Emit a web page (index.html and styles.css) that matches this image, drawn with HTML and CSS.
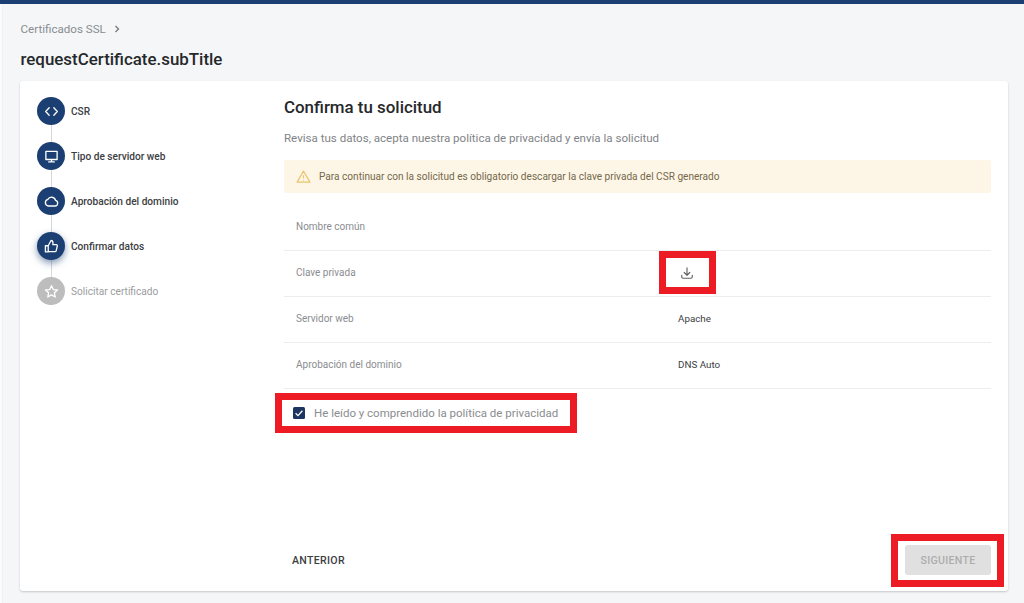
FILE: index.html
```html
<!DOCTYPE html>
<html lang="es">
<head>
<meta charset="utf-8">
<title>Certificados SSL</title>
<link rel="stylesheet" href="styles.css">
</head>
<body>
<header class="topbar"></header>
<div class="shell">
  <aside class="rail"></aside>
  <main class="content">
    <nav class="crumbs"><span>Certificados SSL</span>
      <svg class="crumb-icon" viewBox="0 0 8 8"><path d="M2.5 1l3 3-3 3" /></svg>
    </nav>
    <h1 class="page-title">requestCertificate.subTitle</h1>
    <section class="card">
      <ol class="stepper">
        <li class="step">
          <span class="dot"><svg viewBox="0 0 16 16"><path d="M5.5 4L1.8 8l3.7 4M10.5 4l3.7 4-3.7 4"/></svg></span>
          <span class="step-label">CSR</span>
        </li>
        <li class="step">
          <span class="dot"><svg viewBox="0 0 16 16"><path d="M2 2.6h12v8.6H2zM8 11.2v2.4M5 13.8h6"/></svg></span>
          <span class="step-label">Tipo de servidor web</span>
        </li>
        <li class="step">
          <span class="dot"><svg viewBox="0 0 16 16"><path d="M4.4 12.8h7.4a3 3 0 0 0 .5-5.9 4.4 4.4 0 0 0-8.2-1.1 3.6 3.6 0 0 0 .3 7z"/></svg></span>
          <span class="step-label">Aprobación del dominio</span>
        </li>
        <li class="step step-current">
          <span class="dot"><svg viewBox="0 0 16 16"><path d="M1.5 7.2h3v6.6h-3zM4.5 7.2l3-5.6c1.2 0 2 .8 2 2v2.4h3.6c.8 0 1.3.7 1.1 1.5l-1.2 5c-.2.6-.6 1-1.2 1H4.5"/></svg></span>
          <span class="step-label">Confirmar datos</span>
        </li>
        <li class="step step-pending">
          <span class="dot"><svg viewBox="0 0 16 16"><path d="M8 1.8l1.9 4.1 4.5.5-3.3 3 .9 4.5L8 11.6l-4 2.3.9-4.5-3.3-3 4.5-.5z"/></svg></span>
          <span class="step-label">Solicitar certificado</span>
        </li>
      </ol>
      <div class="panel">
        <h2 class="panel-title">Confirma tu solicitud</h2>
        <p class="panel-sub">Revisa tus datos, acepta nuestra política de privacidad y envía la solicitud</p>
        <div class="alert">
          <svg class="alert-icon" viewBox="0 0 16 16"><path d="M8 2.2L14.8 14H1.2zM8 6.6v3.6M8 11.6v.9"/></svg>
          <span>Para continuar con la solicitud es obligatorio descargar la clave privada del CSR generado</span>
        </div>
        <dl class="rows">
          <div class="row"><dt>Nombre común</dt><dd></dd></div>
          <div class="row"><dt>Clave privada</dt><dd>
            <svg class="download" viewBox="0 0 16 16"><path d="M8 2v8.4M4.8 7.4L8 10.6l3.2-3.2M2 10.6v2a1.4 1.4 0 0 0 1.4 1.4h9.2a1.4 1.4 0 0 0 1.4-1.4v-2"/></svg>
          </dd></div>
          <div class="row"><dt>Servidor web</dt><dd>Apache</dd></div>
          <div class="row"><dt>Aprobación del dominio</dt><dd>DNS Auto</dd></div>
        </dl>
        <label class="consent">
          <span class="checkbox"><svg viewBox="0 0 12 12"><path d="M2.6 6.2l2.4 2.4 4.4-4.8"/></svg></span>
          <span>He leído y comprendido la política de privacidad</span>
        </label>
        <div class="actions">
          <button class="btn-back" type="button">ANTERIOR</button>
          <button class="btn-next" type="button" disabled>SIGUIENTE</button>
        </div>
      </div>
    </section>
  </main>
</div>
<div class="mark mark-download"></div>
<div class="mark mark-consent"></div>
<div class="mark mark-next"></div>
</body>
</html>
```

FILE: styles.css
```css
* { box-sizing: border-box; }
html, body { margin: 0; height: 100%; }
body {
  position: relative;
  width: 1024px;
  height: 603px;
  overflow: hidden;
  background: #f4f6f8;
  font-family: Roboto, "Liberation Sans", sans-serif;
  color: #3c4043;
}
.topbar { height: 4px; background: #1b3f72; }
.shell { display: flex; height: 599px; }
.rail { width: 3px; background: #fbfbfc; border-right: 1px solid #eef0f2; }
.content { flex: 1; padding: 17px 16px 0 17px; display: flex; flex-direction: column; }
.crumbs {
  display: flex;
  align-items: center;
  gap: 7px;
  height: 16px;
  padding-left: 0.5px;
  font-size: 11.6px;
  color: #8a8d90;
}
.crumb-icon { width: 8px; height: 8px; fill: none; stroke: #777; stroke-width: 1.3; }
.page-title {
  margin: 13px 0 12px;
  height: 19px;
  line-height: 19px;
  padding-left: 0.5px;
  font-size: 16.9px;
  font-weight: 500;
  color: #26282a;
}
.card {
  display: flex;
  width: 988px;
  height: 510px;
  background: #fff;
  border-radius: 3px;
  box-shadow: 0 1px 2px rgba(60, 64, 67, 0.25);
}
.stepper {
  width: 264px;
  margin: 0;
  padding: 16px 0 0 17px;
  list-style: none;
}
.step {
  position: relative;
  display: flex;
  align-items: flex-start;
  gap: 6px;
  height: 45px;
  font-size: 10.15px;
  font-weight: 500;
  color: #3c4043;
}
.step::before {
  content: "";
  position: absolute;
  left: 13.5px;
  top: 28px;
  width: 1px;
  height: 17px;
  background: #d6d8da;
}
.step:last-child::before { display: none; }
.dot {
  position: relative;
  flex: none;
  width: 28px;
  height: 28px;
  border-radius: 50%;
  background: #1b3f72;
  display: flex;
  align-items: center;
  justify-content: center;
}
.dot svg {
  width: 15px;
  height: 15px;
  fill: none;
  stroke: #fff;
  stroke-width: 1.4;
  stroke-linejoin: round;
  stroke-linecap: round;
}
.step-label { line-height: 12px; margin-top: 9px; }
.step-current .dot { box-shadow: 0 3px 7px rgba(27, 63, 114, 0.55); }
.step-pending { color: #9a9c9e; font-weight: 400; }
.step-pending .dot { background: #bdbdbd; }
.panel { flex: none; width: 707px; display: flex; flex-direction: column; padding-top: 16px; }
.panel-title {
  margin: 0;
  height: 20px;
  line-height: 20px;
  font-size: 16.9px;
  font-weight: 500;
  color: #26282a;
}
.panel-sub {
  margin: 14px 0 0;
  height: 14px;
  line-height: 14px;
  font-size: 11.55px;
  color: #808386;
}
.alert {
  display: flex;
  align-items: center;
  gap: 8px;
  height: 33px;
  margin-top: 15px;
  padding-left: 12px;
  border-radius: 2px;
  background: #fdf6e7;
  font-size: 10.1px;
  color: #74684a;
}
.alert-icon {
  width: 15px;
  height: 15px;
  fill: none;
  stroke: #e9c46a;
  stroke-width: 1.3;
  stroke-linejoin: round;
}
.rows { margin: 12px 0 0; }
.row {
  display: flex;
  align-items: center;
  height: 46px;
  padding: 0 0 2px 12px;
  border-bottom: 1px solid #eceded;
  font-size: 10px;
}
.row dt { width: 382px; color: #8a8d90; }
.row dd { margin: 0; color: #3c4043; font-weight: 400; font-size: 9.8px; }
.download {
  display: block;
  width: 14px;
  height: 14px;
  margin: 1px 0 0 2px;
  fill: none;
  stroke: #5f6265;
  stroke-width: 1.3;
  stroke-linecap: round;
  stroke-linejoin: round;
}
.consent {
  display: flex;
  align-items: center;
  gap: 9px;
  height: 14px;
  margin: 17px 0 0 9px;
  font-size: 11.5px;
  color: #8a8d90;
}
.checkbox {
  flex: none;
  width: 12px;
  height: 12px;
  border-radius: 1.5px;
  background: #1b3560;
}
.checkbox svg {
  display: block;
  width: 12px;
  height: 12px;
  fill: none;
  stroke: #fff;
  stroke-width: 1.3;
}
.actions {
  display: flex;
  align-items: center;
  justify-content: space-between;
  margin-top: auto;
  margin-bottom: 16px;
  height: 30px;
}
.btn-back, .btn-next {
  font-family: inherit;
  font-size: 10.6px;
  font-weight: 500;
  letter-spacing: 0.3px;
  border: 0;
}
.btn-back { background: none; padding: 0 0 0 8px; color: #3c4043; }
.btn-next {
  width: 86px;
  height: 30px;
  border-radius: 3px;
  background: #e0e0e0;
  color: #adadad;
}
.mark { position: absolute; border: 7px solid #ed1c24; }
.mark-download { left: 659px; top: 251px; width: 57px; height: 43px; }
.mark-consent { left: 275px; top: 393px; width: 302px; height: 40px; }
.mark-next { left: 891px; top: 534px; width: 113px; height: 53px; }
```
